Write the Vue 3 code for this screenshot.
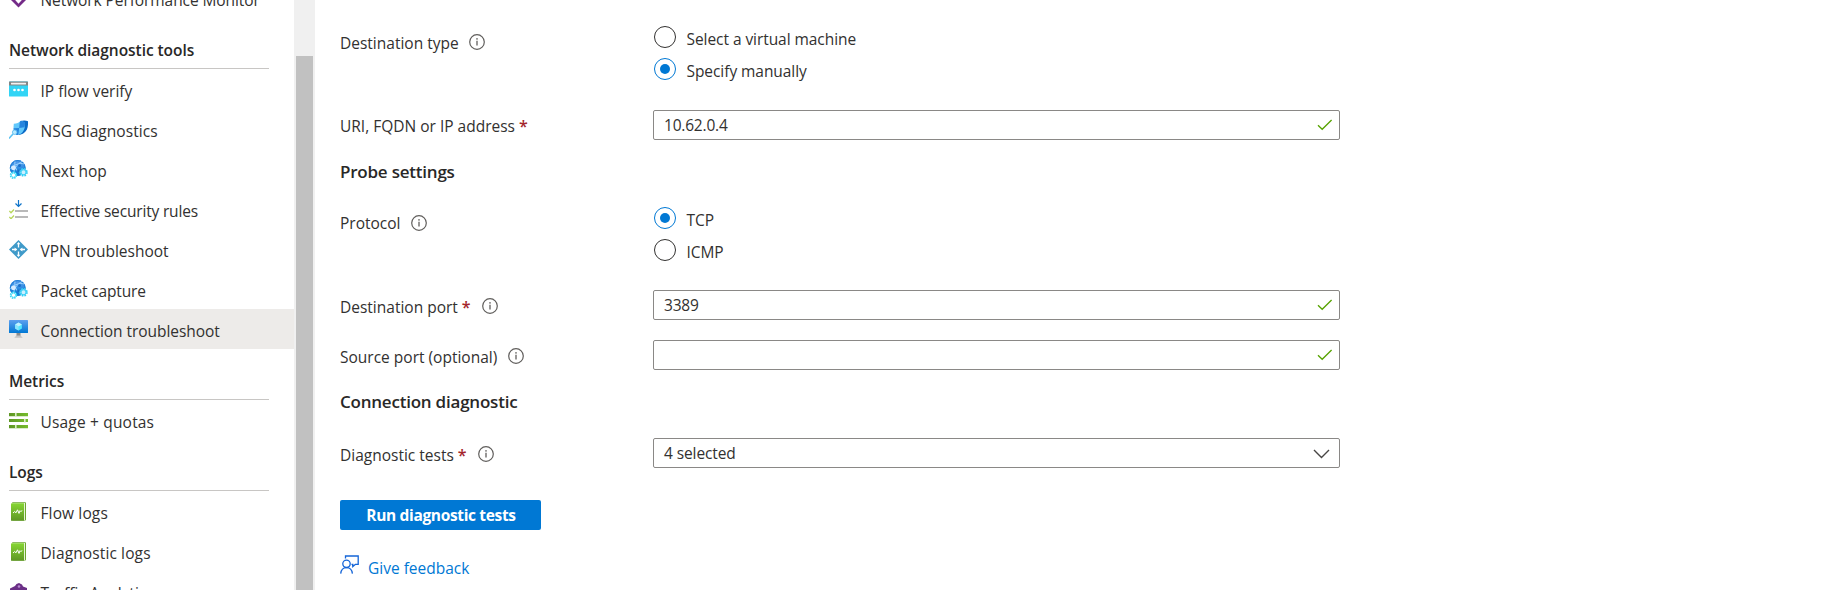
<script setup>
import { ref } from 'vue'

const groups = [
  { title: '', items: [{ label: 'Network Performance Monitor', icon: 'npm' }] },
  {
    title: 'Network diagnostic tools',
    items: [
      { label: 'IP flow verify', icon: 'ip' },
      { label: 'NSG diagnostics', icon: 'nsg' },
      { label: 'Next hop', icon: 'globe' },
      { label: 'Effective security rules', icon: 'rules' },
      { label: 'VPN troubleshoot', icon: 'vpn' },
      { label: 'Packet capture', icon: 'globe', tight: true },
      { label: 'Connection troubleshoot', icon: 'monitor', active: true }
    ]
  },
  { title: 'Metrics', items: [{ label: 'Usage + quotas', icon: 'quota' }] },
  {
    title: 'Logs',
    items: [
      { label: 'Flow logs', icon: 'log' },
      { label: 'Diagnostic logs', icon: 'log' },
      { label: 'Traffic Analytics', icon: 'traffic' }
    ]
  }
]
const destType = ref('manual')
const protocol = ref('tcp')
</script>

<template>
  <div class="page">
    <svg class="defs" width="0" height="0">
      <defs>
        <linearGradient id="gBlue" x1="0" y1="0" x2="0" y2="1"><stop offset="0" stop-color="#5ea0ef" /><stop offset="1" stop-color="#0078d4" /></linearGradient>
        <linearGradient id="gGreen" x1="0" y1="0" x2="0" y2="1"><stop offset="0" stop-color="#86d633" /><stop offset="1" stop-color="#5e9624" /></linearGradient>
        <linearGradient id="gBar" x1="0" y1="0" x2="1" y2="0"><stop offset="0" stop-color="#5e9624" /><stop offset="1" stop-color="#76bc2d" /></linearGradient>
        <symbol id="i-npm" viewBox="0 0 19 19">
          <path d="M9.500.5 18.500 9.500 9.500 18.500.5 9.500z" fill="#742b88" />
          <path d="M9.500 4v10M5.500 9l4 4.500 4-4.500" fill="none" stroke="#fff" stroke-width="1.700" />
        </symbol>
        <symbol id="i-ip" viewBox="0 0 19 19">
          <rect y="1.500" width="19" height="15" rx=".6" fill="#32d4f5" />
          <rect y="1.500" width="19" height="4" rx=".6" fill="#848484" />
          <rect x="2" y="2.800" width="15" height="1.600" rx=".3" fill="#f2f2f2" />
          <circle cx="5.500" cy="10" r="1.350" fill="#fff" /><circle cx="9.500" cy="10" r="1.350" fill="#fff" /><circle cx="13.500" cy="10" r="1.350" fill="#fff" />
        </symbol>
        <symbol id="i-nsg" viewBox="0 0 19 19">
          <path d="M0 18.500 4 14" stroke="#5cc3f2" stroke-width="1.500" />
          <path d="M11.500 1C14 .1 17 .2 19 1.200c.3 5.500-.8 9.300-3.800 11.500-1.700 1.300-3.700 2.200-5.700 2.300z" fill="#0a6ac6" />
          <path d="M4.800 3.800C7.800 3.600 10 2.700 12 .7c1.500 1 2.800 1.200 4 1.300.4 4.500-.6 8-2.500 10.200-1.700 1.700-3.500 2.600-6 2.800C4.800 12.500 4 8.500 4.800 3.800z" fill="#62c8fb" />
          <path d="M10.800 1.800l1.200-1.100c1.500 1 2.800 1.200 4 1.300.1 2 0 3.600-.5 5.300L10.200 8z" fill="#2584de" />
          <path d="M4.500 8.200 10.200 8l-.9 6.700c-.6.200-1.200.3-1.800.3-1.700-1.800-2.700-4-3-6.800z" fill="#2584de" />
          <circle cx="5.700" cy="12.200" r="2.300" fill="#b7e9ff" stroke="#50b8ee" stroke-width=".8" />
        </symbol>
        <symbol id="i-globe" viewBox="0 0 19 19">
          <circle cx="8.700" cy="8" r="7.900" fill="url(#gBlue)" />
          <circle cx="8.700" cy="8" r="7.300" fill="none" stroke="#2380d8" stroke-width="1.200" />
          <path d="M1.500 8.500C5 4.500 11 2.500 15 4M6 1.500C5 7 8 12 13 14.500M13 1.500C8 4 5 9 4.500 14" stroke="#9bd3ff" stroke-width="1" fill="none" />
          <circle cx="4.400" cy="7.800" r="2.400" fill="#d6ecff" />
          <circle cx="10.500" cy="5.500" r="1.500" fill="#1b6fc8" />
          <circle cx="9.600" cy="11" r="1.600" fill="#1b6fc8" />
          <circle cx="14.500" cy="12.300" r="3.300" fill="#bfeefe" stroke="#32cdf5" stroke-width="2" stroke-dasharray="1.600 1" />
          <circle cx="14.500" cy="12.300" r="2.500" fill="#cdefff" stroke="#3fd2f7" stroke-width="1.100" />
          <circle cx="4.500" cy="15.200" r="2.900" fill="#e6faff" stroke="#32d4f5" stroke-width="1.700" stroke-dasharray="1.500 .8" />
          <circle cx="4.500" cy="15.200" r="2.100" fill="#fff" stroke="#50dcf8" stroke-width=".9" />
        </symbol>
        <symbol id="i-rules" viewBox="0 0 19 19">
          <path d="M9.500 0v6.200M6.500 3.500l3 3 3-3" fill="none" stroke="#0f74c9" stroke-width="1.200" />
          <path d="M6 11h13M6 17h13" stroke="#a3a3a3" stroke-width="1.400" />
          <path d="M.3 11l1.700 1.700L5 9.500M.3 17l1.700 1.700L5 15.500" fill="none" stroke="#b7d75a" stroke-width="1.300" />
        </symbol>
        <symbol id="i-vpn" viewBox="0 0 19 19">
          <path d="M9.500 0 19 9.500 9.500 19 0 9.500z" fill="#3f9ac9" />
          <path d="M9.500 3v4.500M9.500 11.500V16M3 9.500h4.500M16 9.500h-4.500" stroke="#fff" stroke-width="1.300" />
          <path d="M7.700 4.300 9.500 2l1.800 2.300zM7.700 14.700 9.500 17l1.800-2.300zM5.600 7.500 8.200 9.500l-2.600 2zM13.400 7.500l-2.600 2 2.600 2z" fill="#fff" />
        </symbol>
        <symbol id="i-monitor" viewBox="0 0 19 19">
          <rect width="19" height="13" rx=".6" fill="url(#gBlue)" />
          <path d="m9.500 2.500 3.400 1.900v4L9.500 10.400 6.100 8.400v-4z" fill="#50e6ff" />
          <path d="m9.500 2.500 3.400 1.900-3.400 2-3.400-2z" fill="#c3f1ff" />
          <path d="M9.500 6.400v4L6.100 8.400v-4z" fill="#8be4fb" />
          <path d="M7.500 13h4v3h-4z" fill="#8c8c8c" /><path d="M7 15.500h5q.5 1.700 2 2.200H5q1.500-.5 2-2.200z" fill="#c4c4c4" />
        </symbol>
        <symbol id="i-quota" viewBox="0 0 19 19">
          <path d="M0 2h19v3.200H0zM0 8h19v3H0zM0 14h19v3.200H0z" fill="url(#gBar)" />
          <path d="M6 1.700h1.600v3.800H6zM15 7.700h1.600v3.800H15zM6 13.700h1.600v3.800H6z" fill="#d9edc5" />
        </symbol>
        <symbol id="i-log" viewBox="0 0 19 19">
          <rect x="3" y=".3" width="14" height="18.300" rx=".8" fill="#6ba62e" />
          <rect x="3" y="1" width="13" height="17" fill="#e6f3d6" />
          <path d="M2 2q0-.7.8-.7H15v17.400H2z" fill="url(#gGreen)" />
          <path d="M4 11l1.700-1.500 1.300 1.300 1.500-3 1.500 3.600 1-2.700 1 1L13 8.300" fill="none" stroke="#fff" stroke-width="1" />
        </symbol>
        <symbol id="i-traffic" viewBox="0 0 19 19">
          <path d="M1 6.500 6 4 7.500 2 10 1 13 2.500l1 2L18 6v8L9.500 18.500 1 14z" fill="#6b2f86" />
          <circle cx="10" cy="4.500" r="1.300" fill="#b88ad0" />
        </symbol>
        <symbol id="i-info" viewBox="0 0 16 16">
          <circle cx="8" cy="8" r="7.300" fill="none" stroke="#605e5c" stroke-width="1.200" />
          <path d="M8 6.800v4.700" stroke="#605e5c" stroke-width="1.300" /><circle cx="8" cy="4.900" r=".8" fill="#605e5c" />
        </symbol>
        <symbol id="i-check" viewBox="0 0 16 12">
          <path d="M1 6.200 5.200 10.300 14.600 1" fill="none" stroke="#57a300" stroke-width="1.300" />
        </symbol>
      </defs>
    </svg>

    <nav class="side">
      <div class="menu">
        <template v-for="g in groups" :key="g.title">
          <h3 v-if="g.title" class="group"><span>{{ g.title }}</span></h3>
          <a v-for="i in g.items" :key="i.label" class="item" :class="['k-' + i.icon, { active: i.active, tight: i.tight }]">
            <svg class="ico"><use :href="'#i-' + i.icon" /></svg>
            <span>{{ i.label }}</span>
          </a>
        </template>
      </div>
      <div class="track"><div class="thumb"></div></div>
    </nav>

    <main class="form">
      <div class="row r-type">
        <div class="label"><span>Destination type</span><svg class="info"><use href="#i-info" /></svg></div>
        <div class="radios">
          <div class="radio" @click="destType = 'vm'"><i :class="{ on: destType === 'vm' }"></i><span>Select a virtual machine</span></div>
          <div class="radio" @click="destType = 'manual'"><i :class="{ on: destType === 'manual' }"></i><span>Specify manually</span></div>
        </div>
      </div>
      <div class="row r-uri">
        <div class="label"><span>URI, FQDN or IP address</span><b>*</b></div>
        <div class="field"><span class="num">10.62.0.4</span><svg class="check"><use href="#i-check" /></svg></div>
      </div>
      <h2 class="h-probe">Probe settings</h2>
      <div class="row r-proto">
        <div class="label"><span>Protocol</span><svg class="info"><use href="#i-info" /></svg></div>
        <div class="radios">
          <div class="radio" @click="protocol = 'tcp'"><i :class="{ on: protocol === 'tcp' }"></i><span>TCP</span></div>
          <div class="radio" @click="protocol = 'icmp'"><i :class="{ on: protocol === 'icmp' }"></i><span>ICMP</span></div>
        </div>
      </div>
      <div class="row r-dport">
        <div class="label"><span>Destination port</span><b>*</b><svg class="info"><use href="#i-info" /></svg></div>
        <div class="field"><span class="num">3389</span><svg class="check"><use href="#i-check" /></svg></div>
      </div>
      <div class="row r-sport">
        <div class="label"><span>Source port (optional)</span><svg class="info"><use href="#i-info" /></svg></div>
        <div class="field"><span></span><svg class="check"><use href="#i-check" /></svg></div>
      </div>
      <h2 class="h-conn">Connection diagnostic</h2>
      <div class="row r-tests">
        <div class="label"><span>Diagnostic tests</span><b>*</b><svg class="info"><use href="#i-info" /></svg></div>
        <div class="field"><span class="sel">4 selected</span>
          <svg class="chev" viewBox="0 0 17 10"><path d="M1 1l7.500 7.500L16 1" fill="none" stroke="#484644" stroke-width="1.400" /></svg>
        </div>
      </div>
      <button class="run">Run diagnostic tests</button>
      <a class="feedback">
        <svg viewBox="0 0 19 19"><path d="M5.500 3.500V1h12.700v8.300h-2.700l-2.700 2.300V9.300h-1.300" fill="none" stroke="#1565d8" stroke-width="1.300" /><circle cx="6.500" cy="8.800" r="3.700" fill="none" stroke="#1565d8" stroke-width="1.300" /><path d="M.7 18.600c.4-3.700 2.800-6 5.800-6s5.500 2.300 5.900 6" fill="none" stroke="#1565d8" stroke-width="1.300" /></svg>
        <span>Give feedback</span>
      </a>
    </main>
  </div>
</template>

<style>
body { background: #fff; overflow: hidden; }
</style>

<style scoped>
.page { display: flex; width: 1846px; height: 590px; overflow: hidden; background: #fff; color: #323130; font: 15.500px/20px "Open Sans", "Noto Sans", sans-serif; }
.defs { position: absolute; }
.side { display: flex; width: 315px; height: 590px; overflow: hidden; flex: none; }
.menu { width: 294px; margin-top: -22px; flex: none; }
.item { display: flex; height: 40px; box-sizing: border-box; padding-left: 9px; gap: 12.500px; white-space: nowrap; }
.item span { margin-top: 12px; }
.item.active { background: #edebe9; }
.item.tight { letter-spacing: -.15px; }
.k-npm { letter-spacing: -.08px; }
.k-rules { letter-spacing: -.17px; }
.k-nsg { letter-spacing: .05px; }
.k-monitor { letter-spacing: -.05px; }
.k-quota { letter-spacing: .18px; }
.k-log { letter-spacing: .12px; }
.ico { width: 19px; height: 19px; margin-top: 11px; flex: none; }
.group { height: 51px; margin: 0 25px 0 9px; box-sizing: border-box; border-bottom: 1px solid #c8c6c4; padding-top: 21.500px; font-size: 15.500px; font-weight: 600; letter-spacing: -.05px; color: #292827; }
.track { width: 21px; height: 590px; background: #f0f0f0; box-sizing: border-box; padding: 56px 2px 0; }
.thumb { height: 534px; background: #c1c1c1; }
.form { flex: 1; padding-left: 25px; }
.row { display: flex; }
.label { display: flex; width: 313px; box-sizing: border-box; flex: none; }
.label b { color: #a4262c; margin-left: 4px; font-weight: 600; font-size: 16px; width: 8px; }
.info { width: 16px; height: 16px; margin: 1px 0 0 10.500px; }
.label b + .info { margin-left: 12px; }
.radios { display: flex; flex-direction: column; gap: 10px; }
.radio { display: flex; height: 22px; gap: 10.500px; padding-left: 1px; }
.radio i { width: 22px; height: 22px; border: 1px solid #323130; border-radius: 50%; box-sizing: border-box; display: flex; align-items: center; justify-content: center; }
.radio i.on { border-color: #0078d4; }
.radio i.on::after { content: ""; width: 10px; height: 10px; border-radius: 50%; background: #0078d4; }
.radio span { margin-top: 3px; letter-spacing: -.06px; }
.field { display: flex; justify-content: space-between; align-items: flex-start; width: 687px; height: 30px; box-sizing: border-box; border: 1px solid #8a8886; border-radius: 2px; padding: 4px 6px 0 10px; }
.field .num { letter-spacing: -.2px; }
.field .sel { letter-spacing: -.1px; }
.check { width: 16px; height: 12px; margin-top: 4px; }
.chev { width: 17px; height: 10px; margin: 6px 3px 0 0; }
h2 { margin: 0; font-size: 17px; line-height: 24px; font-weight: 600; height: 24px; letter-spacing: -.22px; color: #292827; }
.r-type { margin-top: 26px; }
.r-type .label { padding-top: 7px; }
.r-uri { margin-top: 30px; }
.r-uri .label { padding-top: 6px; }
.r-dport .label, .r-sport .label, .r-tests .label { padding-top: 7px; }
.h-probe { margin-top: 20px; }
.r-proto { margin-top: 23px; }
.r-proto .label { padding-top: 6px; }
.r-proto .info { margin-top: 2px; }
.r-dport { margin-top: 29px; }
.r-sport { margin-top: 20px; }
.h-conn { margin-top: 20px; }
.r-tests { margin-top: 24px; }
.run { display: block; width: 201px; height: 30px; margin-top: 32px; padding: 0 0 0 1px; border: 0; border-radius: 2px; background: #0078d4; color: #fff; font: 700 15.500px/28px "Open Sans", sans-serif; letter-spacing: -.35px; }
.feedback { display: flex; margin-top: 25px; gap: 9px; color: #0078d4; }
.feedback svg { width: 19px; height: 19px; }
.feedback span { margin-top: 3px; }
</style>
